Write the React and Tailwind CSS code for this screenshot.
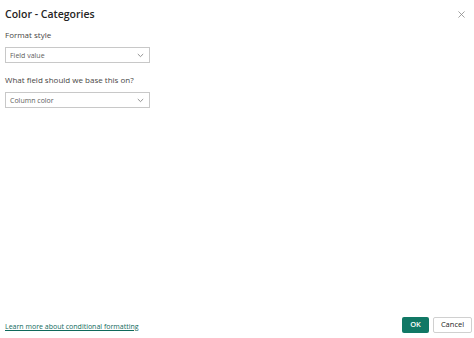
import React from "react";

function Chevron() {
  return (
    <svg width="7" height="5" viewBox="0 0 7 5" fill="none">
      <path d="M0.8 1l2.7 2.6L6.2 1" stroke="#777" strokeWidth="0.8" />
    </svg>
  );
}

function Select({ value }) {
  return (
    <div className="w-[145px] h-[16px] border border-[#c8c8c8] bg-white flex items-center justify-between pl-[4px] pr-[5px]">
      <span className="text-[7px] text-[#605e5c] leading-none">{value}</span>
      <Chevron />
    </div>
  );
}

export default function App() {
  return (
    <div
      className="w-[474px] h-[338px] bg-white flex flex-col relative"
      style={{ fontFamily: '"Open Sans", "Noto Sans", sans-serif' }}
    >
      <div className="flex items-center justify-between pl-[5px] pr-[9px] pt-[6px] h-[22px]">
        <div className="text-[10.5px] font-semibold text-[#252423] leading-[16px]">Color - Categories</div>
        <svg width="7" height="7" viewBox="0 0 8 8">
          <path d="M0.5 0.5l7 7M7.5 0.5l-7 7" stroke="#888" strokeWidth="0.9" />
        </svg>
      </div>
      <div className="pl-[5px] flex flex-col">
        <div className="text-[8px] text-[#484644] mt-[7px] leading-[12px]">Format style</div>
        <div className="mt-[6px]">
          <Select value="Field value" />
        </div>
        <div className="text-[8px] text-[#484644] mt-[11px] leading-[12px]">What field should we base this on?</div>
        <div className="mt-[6px]">
          <Select value="Column color" />
        </div>
      </div>
      <div className="flex-1" />
      <div className="flex items-center justify-between pl-[5px] pr-[2px] pb-[5px]">
        <a className="text-[7px] text-[#0f6a5c] underline leading-none mt-[2px]">Learn more about conditional formatting</a>
        <div className="flex gap-[4px]">
          <div className="w-[27px] h-[16px] bg-[#117865] rounded-[2px] flex items-center justify-center text-white text-[7.5px] font-semibold">OK</div>
          <div className="w-[39px] h-[16px] border border-[#d0d0d0] rounded-[2px] flex items-center justify-center text-[#252423] text-[7.5px]">Cancel</div>
        </div>
      </div>
    </div>
  );
}
